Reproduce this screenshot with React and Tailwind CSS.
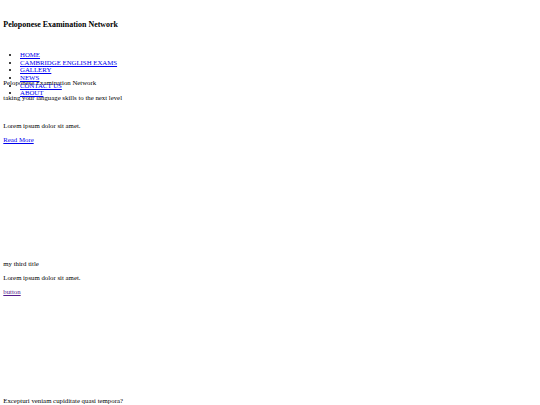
const navLinks = ['HOME', 'CAMBRIDGE ENGLISH EXAMS', 'GALLERY', 'NEWS', 'CONTACT US', 'ABOUT'];

const App = () => {
  return (
    <div className="relative min-h-[405px] bg-white px-[3.3px] text-[6.8px] leading-[7.6px] text-black font-['Liberation_Serif',serif]">
      <header>
        <h3 className="pt-[20.5px] text-[7.95px] font-bold leading-[8.9px]">Peloponese Examination Network</h3>
        <nav className="absolute left-0 top-[51.2px]">
          <ul className="list-disc pl-[20px]">
            {navLinks.map(link => (
              <li key={link}>
                <a href="#" className="text-[#0000ee] underline">{link}</a>
              </li>
            ))}
          </ul>
        </nav>
      </header>

      <section className="mt-[49.8px]">
        <p>Peloponese Examination Network</p>
        <p className="mt-[7.4px]">taking your language skills to the next level</p>
      </section>

      <section className="mt-[20.4px]">
        <p>Lorem ipsum dolor sit amet.</p>
        <a href="#" className="mt-[6.4px] block w-fit text-[#0000ee] underline">Read More</a>
      </section>

      <section className="mt-[116.4px]">
        <p>my third title</p>
        <p className="mt-[6.4px]">Lorem ipsum dolor sit amet.</p>
        <a href="#" className="mt-[6.4px] block w-fit text-[#551a8b] underline">button</a>
      </section>

      <section className="mt-[101.4px]">
        <p>Excepturi veniam cupiditate quasi tempora?</p>
      </section>
    </div>
  );
};

export default App;
